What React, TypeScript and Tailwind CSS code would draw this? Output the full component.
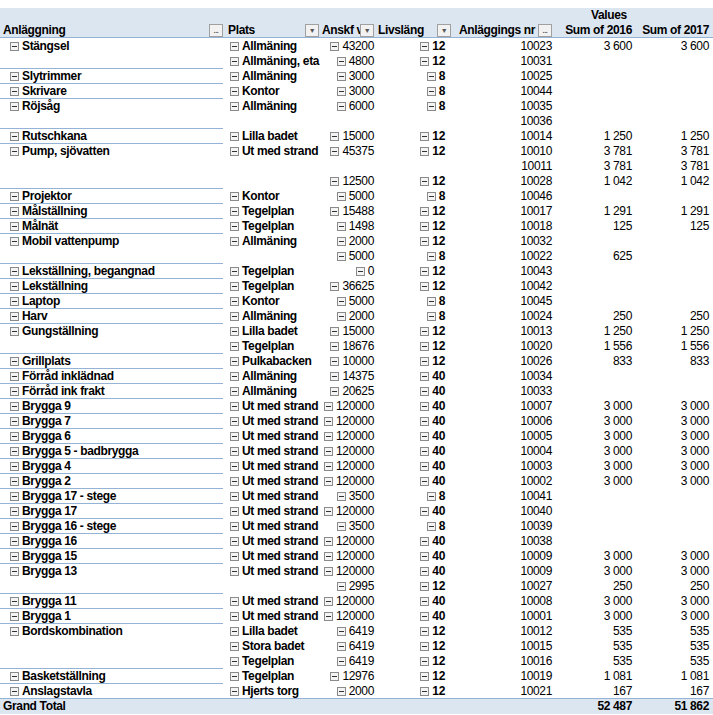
import React from "react";

type R = [string, string, string, string, string, string, string];
const U = "Ut med strand";
const rows: R[] = [
  ["Stängsel", "Allmäning", "43200", "12", "10023", "3 600", "3 600"],
  ["", "Allmäning, eta", "4800", "12", "10031", "", ""],
  ["Slytrimmer", "Allmäning", "3000", "8", "10025", "", ""],
  ["Skrivare", "Kontor", "3000", "8", "10044", "", ""],
  ["Röjsåg", "Allmäning", "6000", "8", "10035", "", ""],
  ["", "", "", "", "10036", "", ""],
  ["Rutschkana", "Lilla badet", "15000", "12", "10014", "1 250", "1 250"],
  ["Pump, sjövatten", U, "45375", "12", "10010", "3 781", "3 781"],
  ["", "", "", "", "10011", "3 781", "3 781"],
  ["", "", "12500", "12", "10028", "1 042", "1 042"],
  ["Projektor", "Kontor", "5000", "8", "10046", "", ""],
  ["Målställning", "Tegelplan", "15488", "12", "10017", "1 291", "1 291"],
  ["Målnät", "Tegelplan", "1498", "12", "10018", "125", "125"],
  ["Mobil vattenpump", "Allmäning", "2000", "12", "10032", "", ""],
  ["", "", "5000", "8", "10022", "625", ""],
  ["Lekställning, begangnad", "Tegelplan", "0", "12", "10043", "", ""],
  ["Lekställning", "Tegelplan", "36625", "12", "10042", "", ""],
  ["Laptop", "Kontor", "5000", "8", "10045", "", ""],
  ["Harv", "Allmäning", "2000", "8", "10024", "250", "250"],
  ["Gungställning", "Lilla badet", "15000", "12", "10013", "1 250", "1 250"],
  ["", "Tegelplan", "18676", "12", "10020", "1 556", "1 556"],
  ["Grillplats", "Pulkabacken", "10000", "12", "10026", "833", "833"],
  ["Förråd inklädnad", "Allmäning", "14375", "40", "10034", "", ""],
  ["Förråd ink frakt", "Allmäning", "20625", "40", "10033", "", ""],
  ["Brygga 9", U, "120000", "40", "10007", "3 000", "3 000"],
  ["Brygga 7", U, "120000", "40", "10006", "3 000", "3 000"],
  ["Brygga 6", U, "120000", "40", "10005", "3 000", "3 000"],
  ["Brygga 5 - badbrygga", U, "120000", "40", "10004", "3 000", "3 000"],
  ["Brygga 4", U, "120000", "40", "10003", "3 000", "3 000"],
  ["Brygga 2", U, "120000", "40", "10002", "3 000", "3 000"],
  ["Brygga 17 - stege", U, "3500", "8", "10041", "", ""],
  ["Brygga 17", U, "120000", "40", "10040", "", ""],
  ["Brygga 16 - stege", U, "3500", "8", "10039", "", ""],
  ["Brygga 16", U, "120000", "40", "10038", "", ""],
  ["Brygga 15", U, "120000", "40", "10009", "3 000", "3 000"],
  ["Brygga 13", U, "120000", "40", "10009", "3 000", "3 000"],
  ["", "", "2995", "12", "10027", "250", "250"],
  ["Brygga 11", U, "120000", "40", "10008", "3 000", "3 000"],
  ["Brygga 1", U, "120000", "40", "10001", "3 000", "3 000"],
  ["Bordskombination", "Lilla badet", "6419", "12", "10012", "535", "535"],
  ["", "Stora badet", "6419", "12", "10015", "535", "535"],
  ["", "Tegelplan", "6419", "12", "10016", "535", "535"],
  ["Basketställning", "Tegelplan", "12976", "12", "10019", "1 081", "1 081"],
  ["Anslagstavla", "Hjerts torg", "2000", "12", "10021", "167", "167"],
];

const Minus = () => (
  <span className="inline-flex items-center justify-center w-[9px] h-[9px] border border-[#8a8a8a] bg-[#f4f4f4] mr-[3px] shrink-0">
    <span className="w-[5px] h-px bg-[#333]" />
  </span>
);

const Drop = ({ dots }: { dots?: boolean }) => (
  <span className="inline-flex items-center justify-center w-[14px] h-[13px] border border-[#a0a0a0] bg-[#f2f2f2] text-[7px] text-[#555] leading-none shrink-0">
    {dots ? "..." : "▼"}
  </span>
);

const cols = "grid grid-cols-[225px_95px_56px_77px_101px_80px_79px]";

export default function App() {
  return (
    <div className="w-[713px] h-[715px] bg-white text-[12px] text-black leading-[15px] pt-[8px] tracking-[-0.35px]" style={{ fontFamily: '"Liberation Sans", Arial, sans-serif' }}>
      <div className="bg-[#dce6f1] font-bold">
        <div className={`${cols} h-[15px]`}>
          <div /><div /><div /><div /><div />
          <div className="pl-[37px]">Values</div>
          <div />
        </div>
        <div className={`${cols} h-[15px] border-b border-[#95b3d7] whitespace-nowrap`}>
          <div className="flex items-center justify-between pl-[3px] pr-[2px]">Anläggning<Drop dots /></div>
          <div className="flex items-center justify-between pl-[3px] pr-[1px]">Plats<Drop /></div>
          <div className="flex items-center pl-[2px] min-w-0"><span className="overflow-hidden w-[38px]">Anskf vä</span><Drop /></div>
          <div className="flex items-center pl-[2px] min-w-0"><span className="overflow-hidden w-[59px]">Livsläng</span><Drop /></div>
          <div className="flex items-center justify-between pl-[6px] pr-[2px]">Anläggings nr<Drop dots /></div>
          <div className="text-right pr-[2px]">Sum of 2016</div>
          <div className="text-right pr-[4px]">Sum of 2017</div>
        </div>
      </div>
      {rows.map((r, i) => (
        <div key={i} className={`${cols} h-[15px] whitespace-nowrap`}>
          <div className={`flex items-center font-bold pl-[10px] mr-[2px] ${r[0] && i > 0 ? "border-t border-[#95b3d7]" : "border-t border-transparent"}`}>
            {r[0] && <><Minus />{r[0]}</>}
          </div>
          <div className="flex items-center font-bold pl-[5px] pt-px">{r[1] && <><Minus />{r[1]}</>}</div>
          <div className="flex items-center justify-end pr-[2px] pt-px">{r[2] && <><Minus />{r[2]}</>}</div>
          <div className="flex items-center justify-end font-bold pr-[8px] pt-px">{r[3] && <><Minus />{r[3]}</>}</div>
          <div className="text-right pr-[2px] pt-px">{r[4]}</div>
          <div className="text-right pr-[2px] pt-px">{r[5]}</div>
          <div className="text-right pr-[4px] pt-px">{r[6]}</div>
        </div>
      ))}
      <div className={`${cols} h-[16px] bg-[#dce6f1] border-t border-[#95b3d7] font-bold`}>
        <div className="pl-[3px]">Grand Total</div>
        <div /><div /><div /><div />
        <div className="text-right pr-[2px]">52 487</div>
        <div className="text-right pr-[4px]">51 862</div>
      </div>
    </div>
  );
}
